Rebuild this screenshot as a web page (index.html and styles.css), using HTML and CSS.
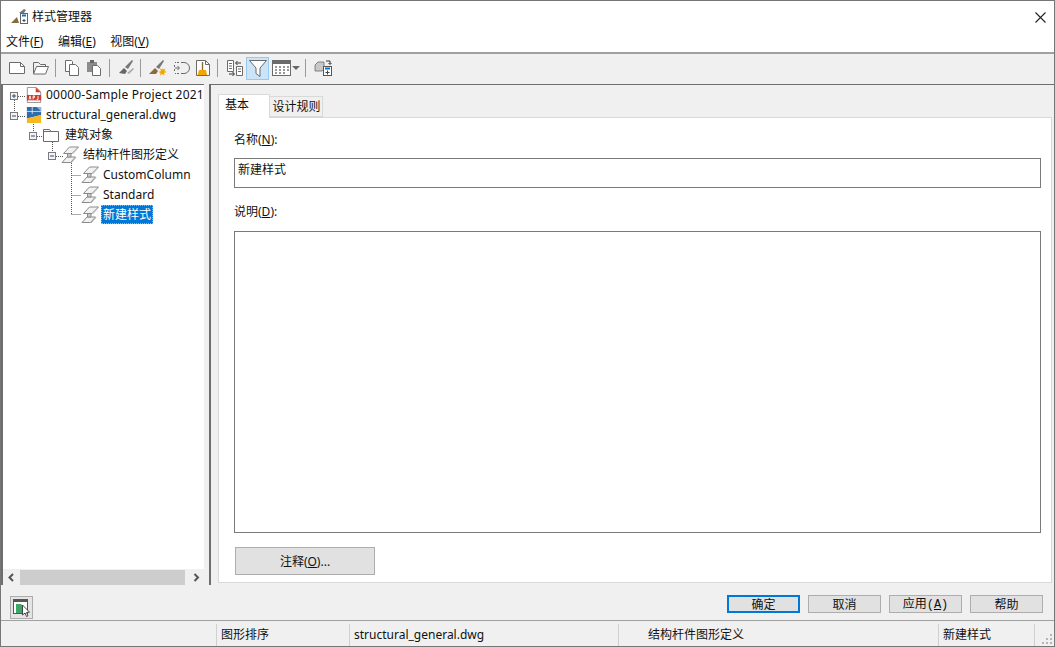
FILE: index.html
```html
<!DOCTYPE html>
<html lang="zh-CN">
<head>
<meta charset="utf-8">
<title>样式管理器</title>
<link rel="stylesheet" href="styles.css">
</head>
<body>
<svg class="defs" width="0" height="0">
  <defs>
    <symbol id="beam" viewBox="0 0 18 18">
      <path d="M1 16.500L6 11h8.500l-5 5.500z" fill="#f2f2f2" stroke="#8a8a8a"/>
      <path d="M6.500 7.500h3.500v3.500H6.500z" fill="#c9c9c9" stroke="#8a8a8a"/>
      <path d="M2.500 7.500L8.500 1h9L11 7.500z" fill="#f2f2f2" stroke="#8a8a8a"/>
      <path d="M11.500 8l6-6.500M10 17l5-5.500" fill="none" stroke="#b5b5b5"/>
    </symbol>
  </defs>
</svg>
<div class="window">
  <header class="titlebar">
    <svg class="app-icon" width="17" height="16" viewBox="0 0 17 16">
      <path d="M0 14l6-6 2 6z" fill="#8a6a3f"/>
      <path d="M8 4l5-4 2 1-2 3z" fill="#777"/>
      <rect x="9.500" y="4.500" width="7" height="10" fill="#fff" stroke="#666"/>
      <path d="M11 6.500h4" stroke="#0078d7" stroke-width="2"/>
      <path d="M11.500 11.500h3M13 10v3" stroke="#444"/>
    </svg>
    <span class="title">样式管理器</span>
    <svg class="close" width="11" height="11" viewBox="0 0 11 11"><path d="M.5.500l10 10M10.500.500l-10 10" stroke="#222" stroke-width="1.100"/></svg>
  </header>
  <nav class="menubar">
    <span>文件(<u>F</u>)</span><span>编辑(<u>E</u>)</span><span>视图(<u>V</u>)</span>
  </nav>
  <div class="toolbar">
    <svg class="tool" width="18" height="18" viewBox="0 0 18 18"><path d="M1.500 3.500h11l4 4v7h-15z" fill="#fff" stroke="#6b6b6b"/><path d="M12.500 3.500v4h4" fill="none" stroke="#6b6b6b"/></svg>
    <svg class="tool t-open" width="18" height="18" viewBox="0 0 18 18"><path d="M1.500 15V3.500h5l2 2h5v2" fill="none" stroke="#6b6b6b"/><path d="M1.500 15l3-7.500h12l-3 7.500z" fill="#fff" stroke="#6b6b6b"/></svg>
    <i class="sep s1"></i>
    <svg class="tool t-copy" width="16" height="18" viewBox="0 0 16 18"><path d="M1.500 1.500h6l1 1v10h-7z" fill="#fff" stroke="#6b6b6b"/><path d="M5.500 5.500h6l3 3v8h-9z" fill="#fff" stroke="#6b6b6b"/></svg>
    <svg class="tool t-paste" width="16" height="18" viewBox="0 0 16 18"><path d="M1 3h10v10H1z" fill="#8c8c8c"/><path d="M4 1h4v3H4z" fill="#666"/><path d="M6.500 6.500h5l3 3v7h-8z" fill="#fff" stroke="#6b6b6b"/></svg>
    <i class="sep s2"></i>
    <svg class="tool t-purge" width="18" height="18" viewBox="0 0 18 18"><path d="M1 14l5-5 3 3-2 3z" fill="#666"/><path d="M7 8l7-7 1 1-5 8z" fill="#777"/><path d="M9 14l6-5 1 1-5 5z" fill="#aaa"/></svg>
    <i class="sep s3"></i>
    <svg class="tool t-style" width="18" height="18" viewBox="0 0 18 18"><path d="M0 15l6-6 3 3-2 3z" fill="#8a6a3f"/><path d="M7 8l7-7 1 1-5 8z" fill="#777"/><path d="M13 8l1 2.500 2.500-1-1 2.500 2 1-2.500 1 .5 2.500-2.500-1.500-2 1.500.5-2.500-2-1 2.500-1-1-2.500 2.500 1z" fill="#f5a500"/></svg>
    <svg class="tool t-dash" width="18" height="18" viewBox="0 0 18 18"><path d="M9 3.500h3a5.500 5.500 0 0 1 0 11H9" fill="none" stroke="#6b6b6b"/><path d="M7 3.500H3M2.500 6v2M2.500 10v2M7 14.500H3" fill="none" stroke="#6b6b6b" stroke-dasharray="2 1"/><path d="M3 9h4M5.500 7l2 2-2 2" fill="none" stroke="#6b6b6b"/></svg>
    <svg class="tool t-broom" width="16" height="18" viewBox="0 0 16 18"><path d="M1.500 1.500h9l4 4v11h-13z" fill="#fff" stroke="#6b6b6b"/><path d="M10.500 1.500v4h4" fill="none" stroke="#6b6b6b"/><path d="M6.800 3h1.400v8H6.800z" fill="#8a6a3f"/><path d="M4 11h7l1 5H2.500z" fill="#f5a500"/></svg>
    <i class="sep s4"></i>
    <svg class="tool t-compare" width="18" height="18" viewBox="0 0 18 18"><path d="M1.500 1.500h6v11h-6zM10.500 7.500h6v9h-6z" fill="#fff" stroke="#6b6b6b"/><path d="M3 4.500h3M3 7h3M3 9.500h3M12 10h3M12 12.500h3" stroke="#6b6b6b"/><path d="M10 4h5M11.500 2l-2 2 2 2M8 15h-5M6.500 13l2 2-2 2" fill="none" stroke="#333"/></svg>
    <span class="filter-btn"><svg width="18" height="18" viewBox="0 0 18 18"><path d="M.5 1.500h17L11 9v8.500l-4-3V9z" fill="#fff" stroke="#6b6b6b"/></svg></span>
    <svg class="tool t-table" width="19" height="16" viewBox="0 0 19 16"><rect x=".5" y=".5" width="18" height="15" fill="#fff" stroke="#6b6b6b"/><path d="M1 1h17v3H1z" fill="#6b6b6b"/><path d="M3 7h2M7 7h2M11 7h2M15 7h2M3 10h2M7 10h2M11 10h2M15 10h2M3 13h2M7 13h2M11 13h2" stroke="#777" stroke-width="1.500"/></svg>
    <i class="caret"></i>
    <i class="sep s5"></i>
    <svg class="tool t-new" width="18" height="18" viewBox="0 0 18 18"><path d="M1 6l3-3h6v7l-2 2H1z" fill="#c8c8c8" stroke="#6b6b6b" stroke-width=".8"/><rect x="9.500" y="7.500" width="8" height="9" fill="#fff" stroke="#555"/><path d="M11 9.500h5" stroke="#0078d7" stroke-width="2"/><path d="M11.500 13.500h4M13.500 11.500v4" stroke="#444"/><path d="M12 2h4v3M14.500 4l1.500 1.500L17.500 4" fill="none" stroke="#333"/></svg>
  </div>
  <main class="main">
    <section class="tree-pane">
      <div class="tree">
        <svg class="connectors" width="100" height="140" viewBox="0 0 100 140">
          <path d="M13.500 16v12M17 12.500h7M17 32.500h7M32.500 36v12M36 52.500h7M51.500 56v12M55 72.500h7M70.500 79v52M70.500 91.500h10M70.500 111.500h10M70.500 130.500h10" fill="none" stroke="#555" stroke-dasharray="1 1"/>
          <g fill="#f4f4f4" stroke="#7a7a7a"><rect x="9.500" y="8.500" width="7" height="7"/><rect x="9.500" y="28.500" width="7" height="7"/><rect x="28.500" y="48.500" width="7" height="7"/><rect x="47.500" y="68.500" width="7" height="7"/></g>
          <path d="M11 12h4M13 10v4" stroke="#2a4d7a"/>
          <path d="M11 32h4M30 52h4M49 72h4" stroke="#2a4d7a"/>
        </svg>
        <div class="row lv0">
          <svg class="node-icon" width="16" height="16" viewBox="0 0 16 18"><path d="M.5.500h10l5 5v12H.5z" fill="#fff" stroke="#8a8a8a"/><path d="M10 .5l5.500 5.500H10z" fill="#d23a2a"/><path d="M0 9h16v6H0z" fill="#d23a2a"/><path d="M2.500 14l1-4 1 4M7 14v-4h1.500v2H7M11 14h1.500v-4" fill="none" stroke="#fff"/></svg>
          <span class="lbl wide">00000-Sample Project 2021</span>
        </div>
        <div class="row lv0">
          <svg class="node-icon" width="16" height="16" viewBox="0 0 16 18"><path d="M0 0h16v9L0 13z" fill="#2f6cab"/><path d="M0 13l16-4v9H0z" fill="#f6b921"/><path d="M6 0v8M0 5h16" stroke="#fff" stroke-width=".8"/><path d="M11 0l5 5V0z" fill="#8fb4d8"/></svg>
          <span class="lbl">structural_general.dwg</span>
        </div>
        <div class="row lv1">
          <svg class="node-icon" width="16" height="14" viewBox="0 0 16 14"><path d="M.5 13.500V1.500h6l1.500 2h7.500v10z" fill="#fff" stroke="#6b6b6b"/><path d="M.5 3.500H8" stroke="#6b6b6b"/></svg>
          <span class="lbl">建筑对象</span>
        </div>
        <div class="row lv2">
          <svg class="node-icon" width="18" height="18"><use href="#beam"/></svg>
          <span class="lbl">结构杆件图形定义</span>
        </div>
        <div class="row lv3">
          <svg class="node-icon" width="18" height="18"><use href="#beam"/></svg>
          <span class="lbl">CustomColumn</span>
        </div>
        <div class="row lv3">
          <svg class="node-icon" width="18" height="18"><use href="#beam"/></svg>
          <span class="lbl">Standard</span>
        </div>
        <div class="row lv3">
          <svg class="node-icon" width="18" height="18"><use href="#beam"/></svg>
          <span class="lbl selected">新建样式</span>
        </div>
      </div>
      <div class="hscroll">
        <svg width="17" height="15" viewBox="0 0 17 15"><path d="M10 4L6.500 7.500 10 11" fill="none" stroke="#555" stroke-width="2"/></svg>
        <span class="thumb"></span>
        <svg width="19" height="15" viewBox="0 0 19 15"><path d="M9.500 4L13 7.500 9.500 11" fill="none" stroke="#555" stroke-width="2"/></svg>
      </div>
    </section>
    <section class="detail">
      <div class="tabs">
        <span class="tab active">基本</span>
        <span class="tab">设计规则</span>
      </div>
      <div class="panel">
        <label class="field-label first">名称(<u>N</u>):</label>
        <div class="input">新建样式</div>
        <label class="field-label second">说明(<u>D</u>):</label>
        <div class="textarea"></div>
        <button class="btn note">注释(<u>O</u>)...</button>
      </div>
    </section>
  </main>
  <div class="actions">
    <span class="icon-btn">
      <svg width="18" height="18" viewBox="0 0 18 18"><rect x=".5" y=".5" width="14" height="14" fill="#fff" stroke="#555"/><path d="M1 1h13v2H1z" fill="#555"/><path d="M3 5h5l2 2v7H3z" fill="#3fa66b"/><path d="M9.500 6v10l2.500-2 1.500 3.500 1.500-.7-1.500-3.300 3-.3z" fill="#fff" stroke="#222" stroke-width=".8"/></svg>
    </span>
    <div class="action-buttons">
      <button class="btn act default">确定</button>
      <button class="btn act">取消</button>
      <button class="btn act">应用<span class="mono">(<u>A</u>)</span></button>
      <button class="btn act">帮助</button>
    </div>
  </div>
  <footer class="status">
    <span class="cell c1"></span>
    <span class="cell c2">图形排序</span>
    <span class="cell c3">structural_general.dwg</span>
    <span class="cell c4"></span>
    <span class="cell c5">结构杆件图形定义</span>
    <span class="cell c6">新建样式</span>
    <svg class="grip" width="12" height="12" viewBox="0 0 12 12"><path d="M9 1h2v2H9zM5 5h2v2H5zM9 5h2v2H9zM1 9h2v2H1zM5 9h2v2H5zM9 9h2v2H9z" fill="#b5b5b5"/></svg>
  </footer>
</div>
</body>
</html>
```
FILE: styles.css
```css
* { box-sizing: border-box; }
html, body { margin: 0; padding: 0; }
body {
  font-family: "Noto Sans", "Noto Sans CJK SC", sans-serif;
  font-size: 12px;
  color: #111;
  background: #f0f0f0;
}
.defs { position: absolute; }
.window {
  width: 1055px;
  height: 647px;
  border: 1px solid #767676;
  background: #f0f0f0;
  display: flex;
  flex-direction: column;
  overflow: hidden;
}
.titlebar {
  height: 30px;
  background: #fff;
  display: flex;
  align-items: center;
  padding: 2px 8px 0 10px;
  flex: none;
}
.app-icon { margin-right: 4px; }
.title { line-height: 16px; }
.close { margin-left: auto; }
.menubar {
  height: 23px;
  background: #fff;
  display: flex;
  gap: 14.500px;
  padding: 0 0 1px 5px;
  align-items: center;
  flex: none;
  border-bottom: 2px solid #a0a0a0;
}
.toolbar {
  height: 30px;
  flex: none;
  display: flex;
  align-items: center;
  padding: 0 0 2px 7px;
  background: #f0f0f0;
}
.tool { flex: none; }
.t-open { margin-left: 6px; }
.t-paste { margin-left: 6px; }
.t-dash { margin-left: 5px; }
.t-broom { margin-left: 5px; }
.t-table { margin-left: 3px; }
.sep { width: 1px; height: 18px; background: #9a9a9a; flex: none; }
.s1 { margin: 0 8px 0 5px; }
.s2 { margin: 0 8px 0 7px; }
.s3 { margin: 0 8px 0 4px; }
.s4 { margin: 0 8px 0 6px; }
.s5 { margin: 0 8px 0 5px; }
.filter-btn {
  width: 23px;
  height: 23px;
  margin-left: 2px;
  background: #cce4f7;
  border: 1px solid #99c9ef;
  display: flex;
  align-items: center;
  justify-content: center;
  flex: none;
}
.caret {
  width: 0;
  height: 0;
  border-left: 4px solid transparent;
  border-right: 4px solid transparent;
  border-top: 4px solid #666;
  margin-left: 1px;
  flex: none;
}
.main {
  flex: 1;
  min-height: 0;
  display: flex;
  gap: 5px;
}
.tree-pane {
  width: 203px;
  flex: none;
  display: flex;
  flex-direction: column;
  background: #fff;
  border-left: 2px solid #6e6e6e;
  border-top: 1px solid #6e6e6e;
}
.tree {
  flex: 1;
  margin-top: -1px;
  position: relative;
  min-height: 0;
}
.connectors { position: absolute; left: -2px; top: 0; }
.row {
  height: 20px;
  display: flex;
  align-items: center;
  position: relative;
  white-space: nowrap;
}
.lv0 { padding-left: 23px; }
.lv1 { padding-left: 40px; }
.lv2 { padding-left: 58px; }
.lv3 { padding-left: 78px; }
.node-icon { flex: none; margin-right: 2px; margin-top: 2px; }
.lv0 .node-icon { margin-right: 2px; }
.lv1 .node-icon { margin-right: 4px; }
.lbl { padding: 0 2px; line-height: 19px; height: 19px; }
.wide { letter-spacing: .2px; }
.selected {
  background: #0078d7;
  color: #fff;
  outline: 1px dotted #ffb000;
  outline-offset: -1px;
}
.hscroll {
  height: 16px;
  flex: none;
  background: #f0f0f0;
  display: flex;
  align-items: center;
}
.thumb { flex: 1; height: 15px; background: #cdcdcd; }
.hscroll svg { flex: none; }
.detail {
  flex: 1;
  min-width: 0;
  background: #f0f0f0;
  border-left: 2px solid #6e6e6e;
  border-top: 1px solid #6e6e6e;
  padding: 9px 2px 3px 7px;
  display: flex;
  flex-direction: column;
}
.tabs { display: flex; height: 23px; flex: none; align-items: flex-start; position: relative; z-index: 1; }
.tab {
  height: 21px;
  width: 53px;
  margin-top: 2px;
  padding-left: 1px;
  border: 1px solid #d9d9d9;
  border-left: 0;
  background: #f0f0f0;
  line-height: 19px;
  text-align: center;
  white-space: nowrap;
}
.tab.active {
  height: 24px;
  width: 52px;
  margin-top: 0;
  background: #fff;
  border: 1px solid #d9d9d9;
  border-bottom: 0;
  text-align: left;
  padding-left: 6px;
}
.panel {
  flex: 1;
  background: #fff;
  border: 1px solid #d9d9d9;
  padding: 13px 10px 7px 15px;
  display: flex;
  flex-direction: column;
}
.field-label { display: block; line-height: 18px; height: 18px; }
.second { margin-top: 15px; }
.input {
  height: 30px;
  margin-top: 9px;
  border: 1px solid #7a7a7a;
  padding: 2px 3px;
  line-height: 18px;
  background: #fff;
}
.textarea {
  height: 302px;
  margin-top: 10px;
  border: 1px solid #7a7a7a;
  background: #fff;
}
.btn {
  font: inherit;
  color: inherit;
  background: #e1e1e1;
  border: 1px solid #adadad;
  padding: 0;
}
.note { width: 140px; height: 28px; margin-top: 14px; margin-left: 1px; flex: none; }
.actions {
  height: 36px;
  flex: none;
  display: flex;
  align-items: center;
  padding: 0 11px 0 9px;
  border-bottom: 1px solid #a0a0a0;
}
.icon-btn {
  width: 23px;
  height: 23px;
  border: 1px solid #adadad;
  background: #e4e4e4;
  display: flex;
  align-items: center;
  justify-content: center;
  margin-top: 10px;
}
.action-buttons { margin-left: auto; display: flex; gap: 8px; margin-top: 3px; }
.act { width: 73px; height: 18px; line-height: 15px; }
.default { border: 2px solid #0078d7; line-height: 13px; }
.mono { font-family: "Liberation Mono", monospace; font-size: 12px; }
.status {
  height: 25px;
  flex: none;
  display: flex;
  align-items: center;
  padding-top: 2px;
  position: relative;
}
.cell {
  height: 22px;
  line-height: 22px;
  padding-left: 4px;
  flex: none;
  border-right: 1px solid #d0d0d0;
  white-space: nowrap;
}
.c1 { width: 216px; }
.c2 { width: 133px; }
.c3 { width: 269px; }
.c4 { width: 25px; padding: 0; border-right: 0; }
.c5 { width: 295px; }
.c6 { width: 96px; }
.grip { position: absolute; right: 1px; bottom: 1px; }
```
